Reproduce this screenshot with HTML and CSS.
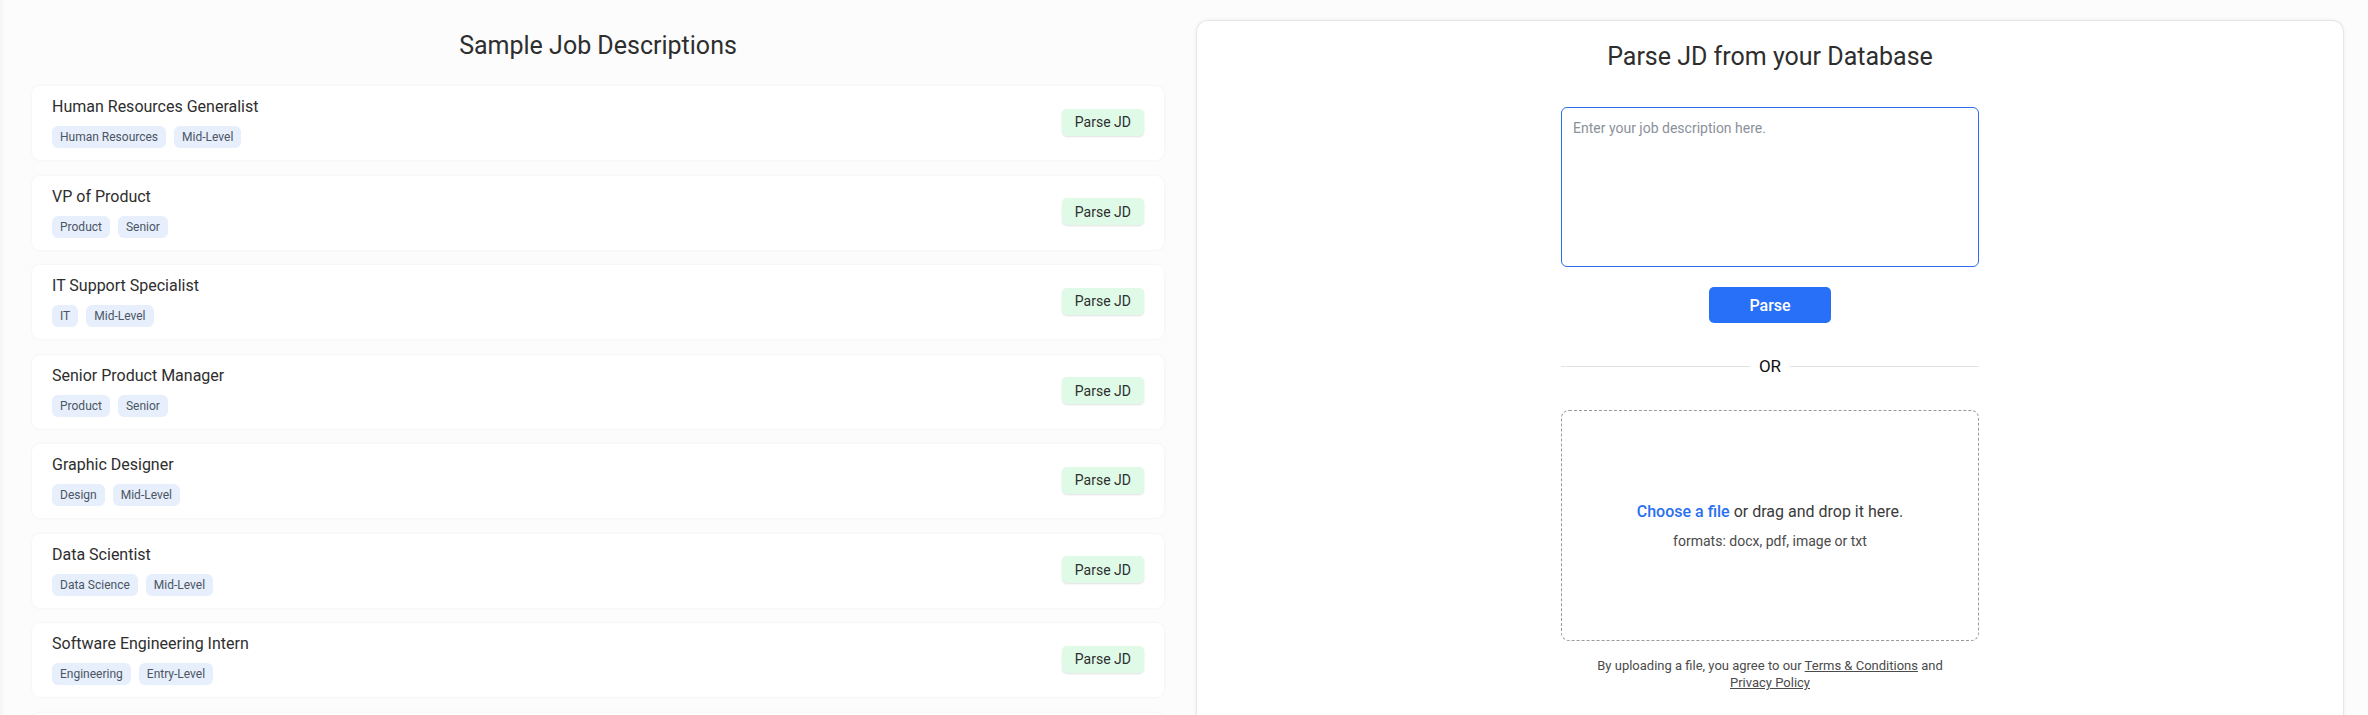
FILE: index.html
```html
<!DOCTYPE html>
<html lang="en">
<head>
    <meta charset="UTF-8">
    <meta name="viewport" content="width=device-width, initial-scale=1.0">
    <title>JD Parser</title>
    <link rel="stylesheet" href="styles.css">
</head>
<body>
    <div class="page">
        <section class="samples">
            <h2 class="samples-title">Sample Job Descriptions</h2>
            <ul class="job-list">
                <li class="job-card">
                    <div class="job-info">
                        <h3 class="job-title">Human Resources Generalist</h3>
                        <div class="job-tags">
                            <span class="tag">Human Resources</span>
                            <span class="tag">Mid-Level</span>
                        </div>
                    </div>
                    <button class="btn-sample">Parse JD</button>
                </li>
                <li class="job-card">
                    <div class="job-info">
                        <h3 class="job-title">VP of Product</h3>
                        <div class="job-tags">
                            <span class="tag">Product</span>
                            <span class="tag">Senior</span>
                        </div>
                    </div>
                    <button class="btn-sample">Parse JD</button>
                </li>
                <li class="job-card">
                    <div class="job-info">
                        <h3 class="job-title">IT Support Specialist</h3>
                        <div class="job-tags">
                            <span class="tag">IT</span>
                            <span class="tag">Mid-Level</span>
                        </div>
                    </div>
                    <button class="btn-sample">Parse JD</button>
                </li>
                <li class="job-card">
                    <div class="job-info">
                        <h3 class="job-title">Senior Product Manager</h3>
                        <div class="job-tags">
                            <span class="tag">Product</span>
                            <span class="tag">Senior</span>
                        </div>
                    </div>
                    <button class="btn-sample">Parse JD</button>
                </li>
                <li class="job-card">
                    <div class="job-info">
                        <h3 class="job-title">Graphic Designer</h3>
                        <div class="job-tags">
                            <span class="tag">Design</span>
                            <span class="tag">Mid-Level</span>
                        </div>
                    </div>
                    <button class="btn-sample">Parse JD</button>
                </li>
                <li class="job-card">
                    <div class="job-info">
                        <h3 class="job-title">Data Scientist</h3>
                        <div class="job-tags">
                            <span class="tag">Data Science</span>
                            <span class="tag">Mid-Level</span>
                        </div>
                    </div>
                    <button class="btn-sample">Parse JD</button>
                </li>
                <li class="job-card">
                    <div class="job-info">
                        <h3 class="job-title">Software Engineering Intern</h3>
                        <div class="job-tags">
                            <span class="tag">Engineering</span>
                            <span class="tag">Entry-Level</span>
                        </div>
                    </div>
                    <button class="btn-sample">Parse JD</button>
                </li>
                
                <li class="job-card"></li>
            </ul>
        </section>

        <section class="parser">
            <h2 class="parser-title">Parse JD from your Database</h2>
            <textarea class="jd-input" placeholder="Enter your job description here."></textarea>
            <button class="btn-parse">Parse</button>

            <div class="divider"><span>OR</span></div>

            <label class="dropzone">
                <input type="file" class="file-input">
                <span class="drop-main"><span class="drop-link">Choose a file</span> or drag and drop it here.</span>
                <span class="drop-formats">formats: docx, pdf, image or txt</span>
            </label>

            <p class="legal">
                By uploading a file, you agree to our <a href="#">Terms &amp; Conditions</a> and <a href="#">Privacy Policy</a>
            </p>
        </section>
    </div>
</body>
</html>
```

FILE: styles.css
```css
* {
    box-sizing: border-box;
}
html, body {
    height: 100%;
}
body {
    margin: 0;
    font-family: Roboto, "Liberation Sans", Arial, sans-serif;
    color: #333;
    background-color: #fcfcfc;
    box-shadow: inset 4px 0 4px -2px rgba(0, 0, 0, 0.04);
    overflow: hidden;
}
.page {
    display: grid;
    grid-template-columns: 1fr 1148px;
    gap: 32px;
    padding: 0 24px 0 32px;
    height: 100%;
}

/* left column: sample list */
.samples-title {
    margin: 30px 0 24px;
    font-size: 25px;
    line-height: 32px;
    font-weight: 400;
    text-align: center;
    color: #2e2e2e;
}
.job-list {
    list-style: none;
    margin: 0;
    padding: 0;
}
.job-card {
    display: flex;
    align-items: center;
    justify-content: space-between;
    height: 74px;
    margin-bottom: 15.5px;
    padding: 10px 20px 12px;
    background-color: #fff;
    border-radius: 8px;
    box-shadow: 0 0 3px rgba(0, 0, 0, 0.06);
}
.job-title {
    margin: 0;
    font-size: 16px;
    line-height: 22px;
    font-weight: 400;
    color: #2e2e2e;
}
.job-tags {
    display: flex;
    gap: 8px;
    margin-top: 8px;
}
.tag {
    display: inline-flex;
    align-items: center;
    height: 22px;
    padding: 0 8px;
    font-size: 12px;
    color: #4b5563;
    background-color: #e7effc;
    border-radius: 6px;
}
.btn-sample {
    height: 27px;
    padding: 0 13px;
    font-family: inherit;
    font-size: 14px;
    color: #2e2e2e;
    background-color: #dffbe8;
    border: none;
    border-radius: 5px;
    box-shadow: 0 1px 2px rgba(0, 0, 0, 0.12);
    cursor: pointer;
}

/* right column: parser panel */
.parser {
    display: flex;
    flex-direction: column;
    align-items: center;
    margin-top: 20px;
    padding-top: 20px;
    background-color: #fff;
    border: 1px solid #e6e6e6;
    border-bottom: none;
    border-radius: 12px 12px 0 0;
    box-shadow: 0 0 4px rgba(0, 0, 0, 0.06);
}
.parser-title {
    margin: 0 0 34px;
    font-size: 25px;
    line-height: 32px;
    font-weight: 400;
    color: #2e2e2e;
}
.jd-input {
    width: 418px;
    height: 160px;
    padding: 10px 11px;
    font-family: inherit;
    font-size: 14px;
    line-height: 20px;
    border: 1px solid #2b6ef2;
    border-radius: 6px;
    resize: none;
    outline: none;
}
.jd-input::placeholder {
    color: #8b919a;
}
.btn-parse {
    width: 122px;
    height: 36px;
    margin-top: 20px;
    font-family: inherit;
    font-size: 16px;
    font-weight: 500;
    color: #fff;
    background-color: #2970f8;
    border: none;
    border-radius: 5px;
    cursor: pointer;
}
.divider {
    display: flex;
    align-items: center;
    gap: 9px;
    width: 418px;
    height: 24px;
    margin-top: 31px;
    font-size: 17px;
    color: #111;
}
.divider::before,
.divider::after {
    content: "";
    flex: 1;
    height: 1px;
    background-color: #e3e3e3;
}
.dropzone {
    display: flex;
    flex-direction: column;
    align-items: center;
    justify-content: center;
    width: 418px;
    height: 231px;
    margin-top: 32px;
    border: 1px dashed #9a9a9a;
    border-radius: 8px;
    cursor: pointer;
}
.file-input {
    display: none;
}
.drop-main {
    font-size: 16px;
    line-height: 24px;
    color: #3a3a3a;
}
.drop-link {
    color: #2a6ff0;
    font-weight: 500;
}
.drop-formats {
    margin-top: 7px;
    font-size: 14px;
    line-height: 20px;
    color: #4a4a4a;
}
.legal {
    max-width: 360px;
    margin: 16px 0 0;
    font-size: 13px;
    line-height: 17px;
    text-align: center;
    color: #4b4b4b;
}
.legal a {
    color: inherit;
}
```
